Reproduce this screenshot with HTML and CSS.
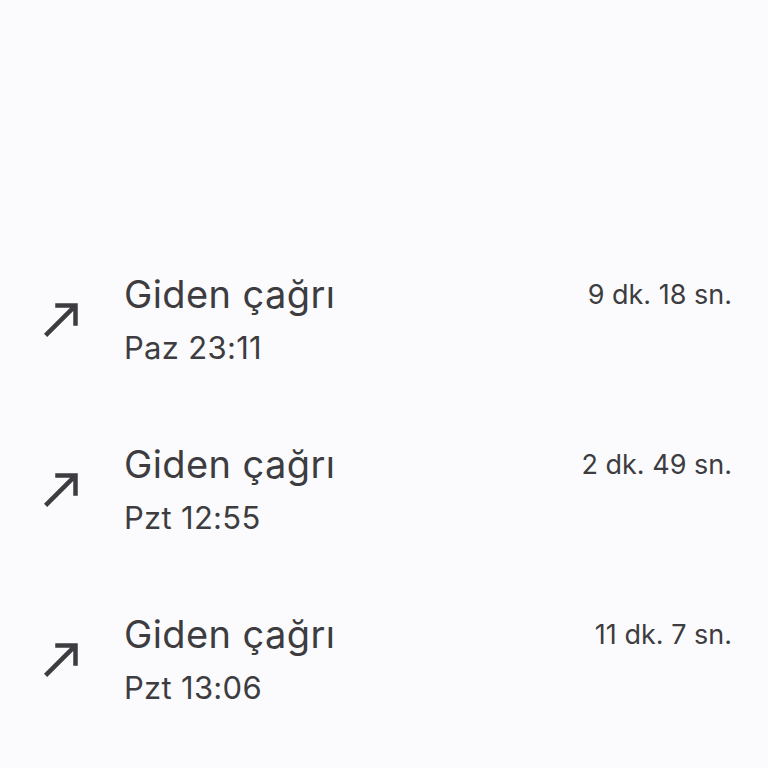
FILE: index.html
```html
<!DOCTYPE html>
<html lang="tr">
<head>
<meta charset="utf-8">
<link rel="stylesheet" href="styles.css">
</head>
<body>
<main class="list">
  <div class="row">
    <svg class="icon" viewBox="0 0 24 24"><path d="M9 5v2h6.59L4 18.59 5.41 20 17 8.41V15h2V5z"/></svg>
    <div class="text">
      <div class="title">Giden çağrı</div>
      <div class="sub">Paz 23:11</div>
    </div>
    <div class="dur">9 dk. 18 sn.</div>
  </div>
  <div class="row">
    <svg class="icon" viewBox="0 0 24 24"><path d="M9 5v2h6.59L4 18.59 5.41 20 17 8.41V15h2V5z"/></svg>
    <div class="text">
      <div class="title">Giden çağrı</div>
      <div class="sub">Pzt 12:55</div>
    </div>
    <div class="dur">2 dk. 49 sn.</div>
  </div>
  <div class="row">
    <svg class="icon" viewBox="0 0 24 24"><path d="M9 5v2h6.59L4 18.59 5.41 20 17 8.41V15h2V5z"/></svg>
    <div class="text">
      <div class="title">Giden çağrı</div>
      <div class="sub">Pzt 13:06</div>
    </div>
    <div class="dur">11 dk. 7 sn.</div>
  </div>
</main>
</body>
</html>
```
FILE: styles.css
```css
html, body {
  margin: 0;
  padding: 0;
  background: #fbfbfd;
  height: 768px;
  overflow: hidden;
}
body {
  font-family: Inter, Roboto, sans-serif;
  color: #3d3d41;
}
.list {
  padding-top: 267px;
  display: flex;
  flex-direction: column;
}
.row {
  height: 170px;
  display: flex;
  align-items: flex-start;
  padding: 0 36px 0 35px;
}
.icon {
  width: 54px;
  height: 54px;
  fill: #3d3d41;
  margin-top: 25px;
  flex: none;
}
.text {
  margin-left: 35px;
  flex: 1;
}
.title {
  font-size: 38px;
  line-height: 54px;
  letter-spacing: 0.4px;
}
.sub {
  font-size: 31px;
  line-height: 50px;
  letter-spacing: 0.3px;
  margin-top: 2px;
}
.dur {
  font-size: 27px;
  line-height: 54px;
  margin-top: 1px;
}
```
